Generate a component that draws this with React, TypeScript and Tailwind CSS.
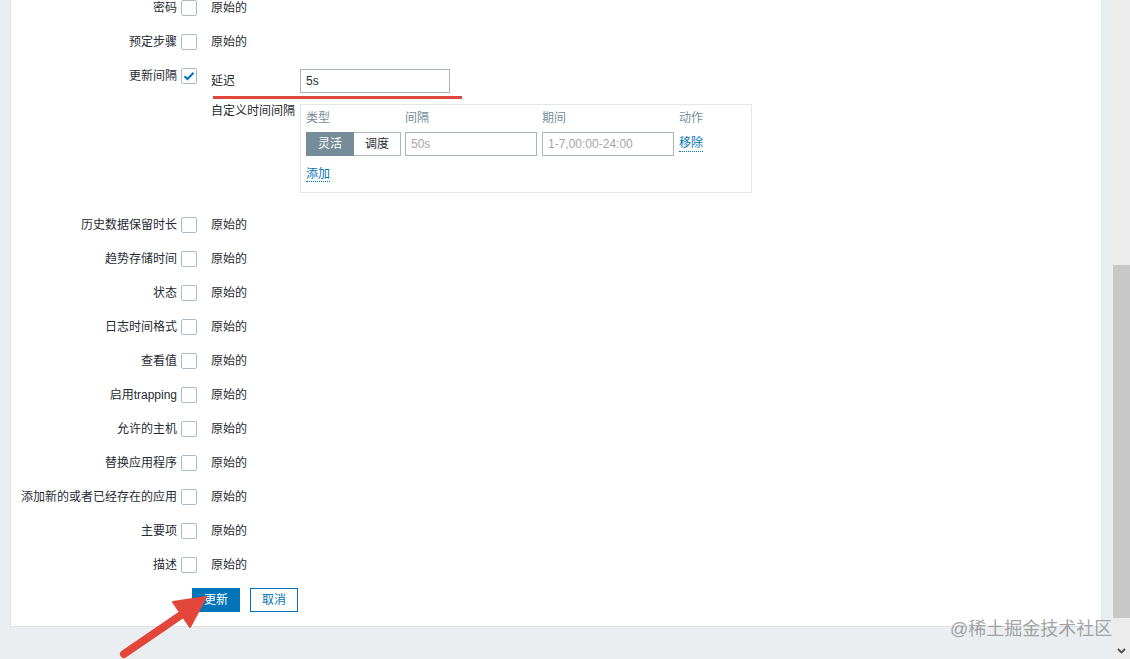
import React from "react";

const FONT = { fontFamily: '"Liberation Sans", "Noto Sans CJK SC", sans-serif' };

function Checkbox({ checked = false }: { checked?: boolean }) {
  return (
    <div className="w-4 h-4 shrink-0 border border-[#acbbc2] bg-white rounded-[2px] flex items-center justify-center">
      {checked && (
        <svg width="12" height="10" viewBox="0 0 12 10">
          <path d="M1.5 5.2 L4.5 8 L10.5 1.8" fill="none" stroke="#0275b8" strokeWidth="2" />
        </svg>
      )}
    </div>
  );
}

function Row({ label }: { label: string }) {
  return (
    <div className="h-[34px] flex items-center">
      <div className="w-[166px] text-right whitespace-nowrap">{label}</div>
      <div className="ml-[4px]">
        <Checkbox />
      </div>
      <div className="ml-[14px]">原始的</div>
    </div>
  );
}

const rowsBottom = [
  "历史数据保留时长",
  "趋势存储时间",
  "状态",
  "日志时间格式",
  "查看值",
  "启用trapping",
  "允许的主机",
  "替换应用程序",
  "添加新的或者已经存在的应用",
  "主要项",
  "描述",
];

export default function App() {
  return (
    <div
      className="relative w-[1130px] h-[659px] overflow-hidden flex bg-[#ebeef0] text-[12px] leading-4 text-[#1f2c33]"
      style={FONT}
    >
      <div className="w-[1113px] h-full pl-[10px] pr-[11px]">
        <div className="-mt-[11px] bg-white border border-t-0 border-[#dfe4e7] pb-[14px]">
          <div className="h-[2px]" />
          <Row label="密码" />
          <Row label="预定步骤" />
          {/* 更新间隔 */}
          <div className="flex items-start pt-[9px] pb-[15px]">
            <div className="w-[166px] text-right">更新间隔</div>
            <div className="ml-[4px]">
              <Checkbox checked />
            </div>
            <div className="ml-[14px] mt-[1px]">
              <div className="flex items-center h-[24px]">
                <div className="w-[89px]">延迟</div>
                <div className="w-[150px] h-[24px] border border-[#acb4b8] flex items-center px-[5px]">5s</div>
              </div>
              <div className="flex items-start mt-[11px]">
                <div className="w-[89px] -mt-[1px] whitespace-nowrap">自定义时间间隔</div>
                <div className="w-[452px] h-[89px] border border-[#e3e7ea] pl-[5px] pt-[5px]">
                  <div className="flex text-[#768d99]">
                    <div className="w-[99px]">类型</div>
                    <div className="w-[137px]">间隔</div>
                    <div className="w-[137px]">期间</div>
                    <div>动作</div>
                  </div>
                  <div className="flex items-center mt-[6px]">
                    <div className="flex w-[95px] h-[24px] mr-[4px]">
                      <div className="w-[48px] h-full bg-[#768d99] text-white flex items-center justify-center">灵活</div>
                      <div className="w-[47px] h-full border border-l-0 border-[#acbbc2] bg-white flex items-center justify-center">调度</div>
                    </div>
                    <div className="w-[132px] h-[24px] mr-[5px] border border-[#acb4b8] flex items-center px-[5px] text-[#a6a6a6]">50s</div>
                    <div className="w-[132px] h-[24px] mr-[5px] border border-[#acb4b8] flex items-center px-[5px] text-[#a6a6a6]">1-7,00:00-24:00</div>
                    <span className="text-[#0275b8] border-b border-dotted border-[#0275b8] leading-[15px]">移除</span>
                  </div>
                  <div className="mt-[10px]">
                    <span className="text-[#0275b8] border-b border-dotted border-[#0275b8] leading-[15px]">添加</span>
                  </div>
                </div>
              </div>
            </div>
          </div>
          {rowsBottom.map((r) => (
            <Row key={r} label={r} />
          ))}
          <div className="flex mt-[6px] ml-[181px] gap-[10px]">
            <div className="w-[48px] h-[24px] bg-[#0275b8] text-white flex items-center justify-center">更新</div>
            <div className="w-[48px] h-[24px] border border-[#0275b8] text-[#0275b8] bg-white flex items-center justify-center">取消</div>
          </div>
        </div>
      </div>
      {/* scrollbar */}
      <div className="w-[17px] h-full bg-[#ececec] flex flex-col">
        <div className="h-[265px]" />
        <div className="h-[353px] bg-[#c8c8c8]" />
        <div className="flex-1 flex items-end justify-center pb-[5px]">
          <svg width="9" height="6" viewBox="0 0 9 6">
            <path d="M1 1 L4.5 4.5 L8 1" fill="none" stroke="#505050" strokeWidth="1.8" />
          </svg>
        </div>
      </div>

      {/* annotations */}
      <div className="absolute left-[213px] top-[96px] w-[249px] h-[3px] bg-[#e0463b]" />
      <svg className="absolute left-0 top-0" width="1130" height="659" viewBox="0 0 1130 659">
        <line x1="124" y1="654" x2="184" y2="613" stroke="#e2463b" strokeWidth="8" strokeLinecap="round" />
        <polygon points="206,597 173,602 190,627" fill="#e2463b" stroke="#e2463b" strokeWidth="2" strokeLinejoin="round" />
      </svg>
      <div className="absolute left-[950px] top-[618px] text-[18px] leading-[22px] text-[#8c8c8c]/80 whitespace-nowrap">
        @稀土掘金技术社区
      </div>
    </div>
  );
}
